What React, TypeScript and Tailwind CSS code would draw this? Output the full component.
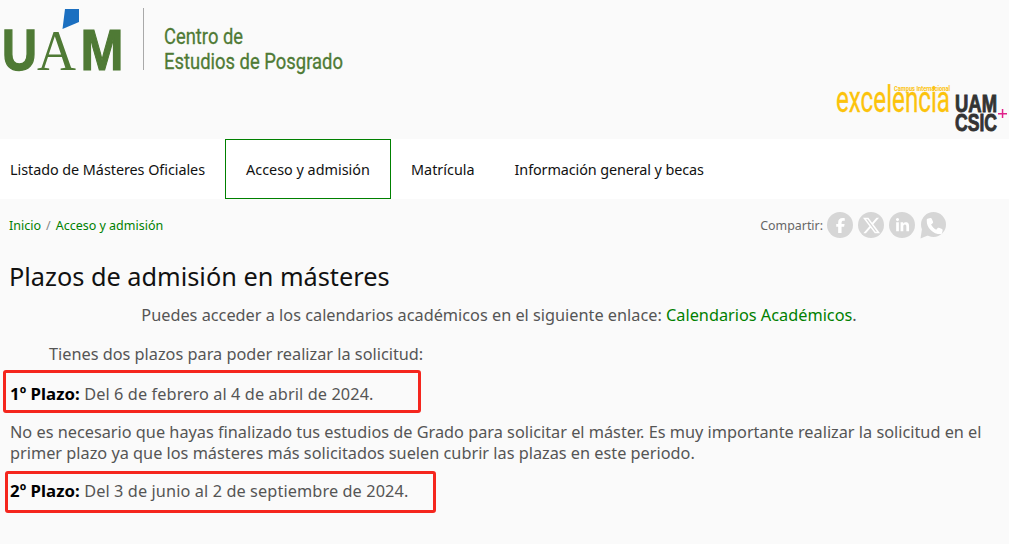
import { FaFacebookF, FaXTwitter, FaLinkedinIn, FaPhone } from "react-icons/fa6";
import type { ReactNode } from "react";

const GREEN = "#4f7a35";

function UamLogo() {
  return (
    <svg width="350" height="83" viewBox="0 0 350 83" className="block overflow-visible">
      <polygon points="65,9 79,9 79,22 62.5,29" fill="#1b6fc0" />
      <text x="2" y="69.5" fontFamily="Liberation Sans" fontWeight="700" fontSize="57" fill={GREEN} stroke={GREEN} strokeWidth="1.4" textLength="35" lengthAdjust="spacingAndGlyphs">U</text>
      <text x="37" y="70" fontFamily="Liberation Serif" fontSize="58" fill={GREEN} textLength="39" lengthAdjust="spacingAndGlyphs">A</text>
      <text x="80.5" y="70" fontFamily="Liberation Sans" fontWeight="700" fontSize="57" fill={GREEN} stroke={GREEN} strokeWidth="1.2" textLength="43" lengthAdjust="spacingAndGlyphs">M</text>
      <rect x="143" y="8" width="1" height="62" fill="#a9a9a9" />
      <text x="164" y="44" fontFamily="Roboto" fontSize="21.5" fill={GREEN} stroke={GREEN} strokeWidth="0.3" textLength="79" lengthAdjust="spacingAndGlyphs">Centro de</text>
      <text x="164" y="69" fontFamily="Roboto" fontSize="21.5" fill={GREEN} stroke={GREEN} strokeWidth="0.3" textLength="179" lengthAdjust="spacingAndGlyphs">Estudios de Posgrado</text>
    </svg>
  );
}

function CeiLogo() {
  return (
    <svg width="174" height="56" viewBox="0 0 174 56" className="block overflow-visible">
      <text x="59" y="8" fontFamily="Roboto" fontWeight="700" fontSize="7" fill="#fcc30b" textLength="56" lengthAdjust="spacingAndGlyphs">Campus Internacional</text>
      <text x="1" y="29" fontFamily="Roboto" fontSize="36" fill="#fcc30b" stroke="#fcc30b" strokeWidth="0.3" textLength="114" lengthAdjust="spacingAndGlyphs">excelencia</text>
      <text x="120" y="29" fontFamily="Liberation Sans" fontWeight="700" fontSize="24" fill="#333333" stroke="#333333" strokeWidth="0.9" textLength="42" lengthAdjust="spacingAndGlyphs">UAM</text>
      <text x="120" y="48" fontFamily="Liberation Sans" fontWeight="700" fontSize="24" fill="#333333" stroke="#333333" strokeWidth="0.9" textLength="42" lengthAdjust="spacingAndGlyphs">CSIC</text>
      <rect x="163" y="30" width="9" height="1.5" fill="#e0218a" />
      <rect x="166.8" y="26" width="1.5" height="9" fill="#e0218a" />
    </svg>
  );
}

function Round({ children }: { children: ReactNode }) {
  return (
    <span className="flex h-[26px] w-[26px] items-center justify-center rounded-full bg-[#d6d6d6] text-white">
      {children}
    </span>
  );
}

function WhatsappIcon() {
  return (
    <svg width="26" height="27" viewBox="0 0 26 27" className="block">
      <circle cx="13.5" cy="12.5" r="12.5" fill="#d6d6d6" />
      <polygon points="2,17 0.5,26.5 9,23" fill="#d6d6d6" />
      <FaPhone x="6.5" y="6" width="14" height="14" color="#ffffff" />
    </svg>
  );
}

export default function App() {
  return (
    <div className="relative min-h-[544px] w-[1009px] overflow-hidden bg-[#fafafa] font-['Noto_Sans',sans-serif] text-[16.3px] leading-[21px] text-[#555555]">
      <header className="h-[139px]">
        <UamLogo />
        <div className="flex justify-end"><CeiLogo /></div>
      </header>

      <nav className="flex h-[60px] items-stretch bg-white text-[14.4px] text-[#111111]">
        <a className="flex w-[225px] items-center pl-[10px] tracking-[-0.05px]">Listado de Másteres Oficiales</a>
        <a className="flex w-[166px] items-center justify-center border border-[#008000]">Acceso y admisión</a>
        <a className="flex items-center px-[20px]">Matrícula</a>
        <a className="flex items-center px-[20px] tracking-[-0.1px]">Información general y becas</a>
      </nav>

      <div className="flex h-[52px] items-center justify-between pl-[9px] pr-[63px]">
        <div className="flex items-center gap-[5px] text-[12.5px] text-[#008000]">
          <span>Inicio</span>
          <span className="text-[#888888]">/</span>
          <span>Acceso y admisión</span>
        </div>
        <div className="flex items-center gap-[4px]">
          <span className="text-[12.4px] text-[#666666]">Compartir:</span>
          <div className="flex items-center gap-[5px]">
            <Round><FaFacebookF size={15} /></Round>
            <Round><FaXTwitter size={19} /></Round>
            <Round><FaLinkedinIn size={15} /></Round>
            <WhatsappIcon />
          </div>
        </div>
      </div>

      <main className="px-[10px]">
        <h1 className="-ml-[1px] mt-[9px] text-[25.3px] font-normal leading-[32px] text-[#111111]">Plazos de admisión en másteres</h1>
        <p className="mt-[13px] pr-[11px] text-center">
          Puedes acceder a los calendarios académicos en el siguiente enlace: <a className="text-[#008000]">Calendarios Académicos</a>.
        </p>
        <p className="mt-[18px] pl-[39px]">Tienes dos plazos para poder realizar la solicitud:</p>
        <p className="mt-[18px] tracking-[0.1px]"><strong className="text-[16.8px] leading-[21px] tracking-[0.05px] text-black">1º Plazo:</strong> Del 6 de febrero al 4 de abril de 2024.</p>
        <p className="mt-[17px]">No es necesario que hayas finalizado tus estudios de Grado para solicitar el máster. Es muy importante realizar la solicitud en el primer plazo ya que los másteres más solicitados suelen cubrir las plazas en este periodo.</p>
        <p className="mt-[16px] tracking-[0.1px]"><strong className="text-[16.8px] leading-[21px] tracking-[0.05px] text-black">2º Plazo:</strong> Del 3 de junio al 2 de septiembre de 2024.</p>
      </main>

      <div className="absolute left-[3px] top-[370px] h-[43px] w-[418px] rounded-[3px] border-[3px] border-[#f5261e]" />
      <div className="absolute left-[5px] top-[471px] h-[42px] w-[431px] rounded-[3px] border-[3px] border-[#f5261e]" />
    </div>
  );
}
